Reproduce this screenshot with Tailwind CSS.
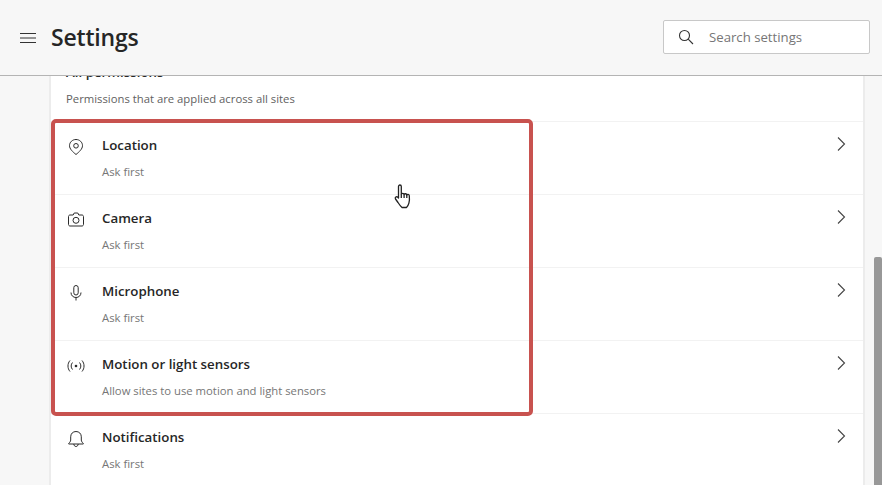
<!DOCTYPE html>
<html lang="en">

<head>
    <meta charset="utf-8" />
    <meta content="width=device-width, initial-scale=1.0" name="viewport" />
    <title>Settings</title>
    <script src="https://cdn.jsdelivr.net/npm/@tailwindcss/browser@4"></script>
</head>

<body class="w-[882px] h-[485px] overflow-hidden bg-[#f7f7f7] font-['Open_Sans',sans-serif] text-[#262626] flex flex-col relative">
    <!-- header -->
    <header class="h-[76px] shrink-0 flex items-center justify-between border-b border-[#b4b4b4] bg-[#f7f7f7] pl-5 pr-3">
        <div class="flex items-center">
            <svg width="16" height="12" viewBox="0 0 16 12" fill="none" stroke="#333" stroke-width="1" class="mr-[15px]">
                <path d="M0 1.5h16M0 6h16M0 10.500h16" />
            </svg>
            <h1 class="text-[23px] leading-8 font-semibold tracking-[-0.2px] -mt-[1px]">Settings</h1>
        </div>
        <div class="w-[207px] h-[34px] mb-[1px] flex items-center bg-white border border-[#c8c8c8] rounded-[2px] pl-[14px]">
            <svg width="16" height="16" viewBox="0 0 16 16" fill="none" stroke="#333" stroke-width="1.100">
                <circle cx="6.500" cy="6.500" r="5" />
                <path d="M10.200 10.200L15 15" />
            </svg>
            <span class="ml-[15px] mt-[1px] text-[13.200px] text-[#767676]">Search settings</span>
        </div>
    </header>

    <!-- page -->
    <main class="flex-1 overflow-hidden flex">
        <section class="ml-[49px] w-[816px] h-fit bg-white border-x-2 border-[#ececec] -mt-[14px]">
            <div class="h-[60px] border-b border-[#f2f2f2] pl-[15px]">
                <p class="text-[13.300px] leading-[20px] font-semibold">All permissions</p>
                <p class="mt-[9px] text-[11.300px] leading-[16px] text-[#616161]">Permissions that are applied across all sites</p>
            </div>

            <div class="h-[73px] flex border-b border-[#f2f2f2] pl-[15px] pr-[17px]">
                <svg width="20" height="20" viewBox="0 0 20 20" fill="none" stroke="#2b2b2b" stroke-width="1" class="mt-[15px]">
                    <path d="M10 2.500c3.600 0 6.500 2.700 6.500 6.200 0 3.200-3.300 6.200-6.500 8.800-3.200-2.600-6.500-5.600-6.500-8.800 0-3.500 2.900-6.200 6.500-6.200z" />
                    <circle cx="10" cy="8.800" r="2.300" />
                </svg>
                <div class="ml-[16px] flex-1">
                    <p class="mt-[13px] text-[13.300px] leading-[20px] font-semibold">Location</p>
                    <p class="mt-[9px] text-[11.300px] leading-[16px] text-[#767676]">Ask first</p>
                </div>
                <svg width="10" height="14" viewBox="0 0 10 14" fill="none" stroke="#444" stroke-width="1.100" class="mt-[15px]">
                    <path d="M2 .5l6.500 6.500-6.500 6.500" />
                </svg>
            </div>

            <div class="h-[73px] flex border-b border-[#f2f2f2] pl-[15px] pr-[17px]">
                <svg width="20" height="20" viewBox="0 0 20 20" fill="none" stroke="#2b2b2b" stroke-width="1" class="mt-[15px]">
                    <path d="M7.200 5l1-2h3.600l1 2h3.200c.8 0 1.500.7 1.500 1.500v8c0 .8-.7 1.500-1.500 1.500h-12c-.8 0-1.500-.7-1.500-1.500v-8c0-.8.7-1.500 1.500-1.500z" />
                    <circle cx="10" cy="10.300" r="3" />
                </svg>
                <div class="ml-[16px] flex-1">
                    <p class="mt-[13px] text-[13.300px] leading-[20px] font-semibold">Camera</p>
                    <p class="mt-[9px] text-[11.300px] leading-[16px] text-[#767676]">Ask first</p>
                </div>
                <svg width="10" height="14" viewBox="0 0 10 14" fill="none" stroke="#444" stroke-width="1.100" class="mt-[15px]">
                    <path d="M2 .5l6.500 6.500-6.500 6.500" />
                </svg>
            </div>

            <div class="h-[73px] flex border-b border-[#f2f2f2] pl-[15px] pr-[17px]">
                <svg width="20" height="20" viewBox="0 0 20 20" fill="none" stroke="#2b2b2b" stroke-width="1" class="mt-[15px]">
                    <rect x="7.800" y="2.500" width="4.400" height="9.500" rx="2.200" />
                    <path d="M5 9.500c0 3 2.200 5 5 5s5-2 5-5M10 14.500v3" />
                </svg>
                <div class="ml-[16px] flex-1">
                    <p class="mt-[13px] text-[13.300px] leading-[20px] font-semibold">Microphone</p>
                    <p class="mt-[9px] text-[11.300px] leading-[16px] text-[#767676]">Ask first</p>
                </div>
                <svg width="10" height="14" viewBox="0 0 10 14" fill="none" stroke="#444" stroke-width="1.100" class="mt-[15px]">
                    <path d="M2 .5l6.500 6.500-6.500 6.500" />
                </svg>
            </div>

            <div class="h-[73px] flex border-b border-[#f2f2f2] pl-[15px] pr-[17px]">
                <svg width="20" height="20" viewBox="0 0 20 20" fill="none" stroke="#2b2b2b" stroke-width="1" class="mt-[15px]">
                    <path d="M4 4.500c-2.700 3.200-2.700 7.800 0 11M6.500 6.500c-1.800 2-1.800 5 0 7M16 4.500c2.700 3.200 2.700 7.800 0 11M13.500 6.500c1.800 2 1.800 5 0 7" />
                    <circle cx="10" cy="10" r="1.300" fill="#2b2b2b" stroke="none" />
                </svg>
                <div class="ml-[16px] flex-1">
                    <p class="mt-[13px] text-[13.300px] leading-[20px] font-semibold">Motion or light sensors</p>
                    <p class="mt-[9px] text-[11.300px] leading-[16px] text-[#767676]">Allow sites to use motion and light sensors</p>
                </div>
                <svg width="10" height="14" viewBox="0 0 10 14" fill="none" stroke="#444" stroke-width="1.100" class="mt-[15px]">
                    <path d="M2 .5l6.500 6.500-6.500 6.500" />
                </svg>
            </div>

            <div class="h-[73px] flex border-b border-[#f2f2f2] pl-[15px] pr-[17px]">
                <svg width="20" height="20" viewBox="0 0 20 20" fill="none" stroke="#2b2b2b" stroke-width="1" class="mt-[15px]">
                    <path d="M10 2.500c-3.200 0-5.300 2.300-5.300 5.300v3.200c0 1.300-1 2.500-2 3.500v.5h14.600v-.5c-1-1-2-2.200-2-3.500V7.800c0-3-2.100-5.300-5.300-5.300zM7.800 15c0 1.400 1 2.500 2.200 2.500s2.200-1.100 2.200-2.500" />
                </svg>
                <div class="ml-[16px] flex-1">
                    <p class="mt-[13px] text-[13.300px] leading-[20px] font-semibold">Notifications</p>
                    <p class="mt-[9px] text-[11.300px] leading-[16px] text-[#767676]">Ask first</p>
                </div>
                <svg width="10" height="14" viewBox="0 0 10 14" fill="none" stroke="#444" stroke-width="1.100" class="mt-[15px]">
                    <path d="M2 .5l6.500 6.500-6.500 6.500" />
                </svg>
            </div>
        </section>
    </main>

    <!-- scrollbar thumb -->
    <div class="absolute right-0 top-[257px] w-[8px] h-[228px] bg-[#989898] rounded-t-[2px]"></div>

    <!-- red highlight drawn over the list -->
    <div class="absolute left-[51px] top-[119px] w-[482px] h-[297px] border-[4px] border-[#c8524f] rounded-[5px]"></div>

    <!-- hand cursor -->
    <svg class="absolute left-[393px] top-[183px]" width="21" height="28" viewBox="0 0 20 28" fill="white" stroke="#222" stroke-width="1.300" stroke-linejoin="round">
        <path d="M5 3.500c0-2 2.800-2 2.800 0v8c.3-1.600 2.600-1.500 2.800.2.300-1.400 2.500-1.300 2.700.4.400-1.200 2.400-1 2.500.6.300 2.800.2 5.300-.4 7.500-.5 1.800-1.200 3.300-2.400 4.300H8.500c-1.300-1-2.700-3-4-5L2 16c-1-1.600 1-3 2.400-1.700L5 15z" />
        <path d="M10.600 11.700v3.300M13.300 12.100v3M7.800 11.500v3.500" fill="none" />
    </svg>
</body>

</html>
